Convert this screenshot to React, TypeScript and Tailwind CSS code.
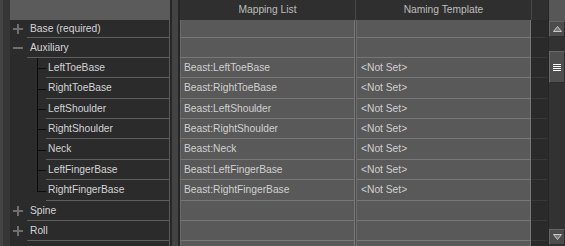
import React from "react";

const ROW_H = [18, 20, 20, 21, 20, 20, 21, 20, 21, 20, 20, 20];

type Item = { label: string; kind: "top" | "open" | "child" | "empty"; map?: string; last?: boolean };

const items: Item[] = [
  { label: "Base (required)", kind: "top" },
  { label: "Auxiliary", kind: "open" },
  { label: "LeftToeBase", kind: "child", map: "Beast:LeftToeBase" },
  { label: "RightToeBase", kind: "child", map: "Beast:RightToeBase" },
  { label: "LeftShoulder", kind: "child", map: "Beast:LeftShoulder" },
  { label: "RightShoulder", kind: "child", map: "Beast:RightShoulder" },
  { label: "Neck", kind: "child", map: "Beast:Neck" },
  { label: "LeftFingerBase", kind: "child", map: "Beast:LeftFingerBase" },
  { label: "RightFingerBase", kind: "child", map: "Beast:RightFingerBase", last: true },
  { label: "Spine", kind: "top" },
  { label: "Roll", kind: "top" },
  { label: "", kind: "empty" },
];

const font = { fontFamily: '"Liberation Sans", Arial, sans-serif' };

function Plus() {
  return (
    <svg width="10" height="10" viewBox="0 0 10 10">
      <rect x="0" y="4" width="10" height="2" fill="#6f6f6f" />
      <rect x="4" y="0" width="2" height="10" fill="#6f6f6f" />
    </svg>
  );
}
function Minus() {
  return (
    <svg width="10" height="10" viewBox="0 0 10 10">
      <rect x="0" y="4" width="10" height="2" fill="#6f6f6f" />
    </svg>
  );
}

function TreeRow({ it, h }: { it: Item; h: number }) {
  if (it.kind === "empty") {
    return <div className="flex shrink-0" style={{ height: h }} />;
  }
  if (it.kind === "child") {
    return (
      <div className="flex shrink-0" style={{ height: h }}>
        <div className="w-[27px] shrink-0" />
        <div className="relative w-[9px] shrink-0">
          <div
            className="absolute left-0 top-0 w-px bg-[#0c0c0c]"
            style={{ height: it.last ? "50%" : "100%" }}
          />
          <div className="absolute left-0 top-1/2 h-px w-[9px] bg-[#0c0c0c]" />
        </div>
        <div className="flex flex-1 items-center border-b border-[#5e5e5e] pl-[2px] text-[10.25px] text-[#d2d2d6]">
          {it.label}
        </div>
      </div>
    );
  }
  return (
    <div className="flex shrink-0" style={{ height: h }}>
      <div className="flex w-[17px] shrink-0 items-center justify-end">
        <div className="mr-[4px] flex">{it.kind === "open" ? <Minus /> : <Plus />}</div>
      </div>
      <div className="flex flex-1 items-center border-b border-[#5e5e5e] pl-[3px] text-[10.25px] text-[#d4d4da]">
        {it.label}
      </div>
    </div>
  );
}

function TableRow({ it, h }: { it: Item; h: number }) {
  return (
    <div className="flex shrink-0" style={{ height: h }}>
      <div className="flex w-[175px] shrink-0 items-center border-b border-r border-[#777] border-l border-l-[#6a6a6a] bg-[#595959] pl-[3px] text-[10.25px] text-[#d0d0d0]">
        {it.map ?? ""}
      </div>
      <div className="w-px shrink-0 bg-[#505050]" />
      <div className="flex w-[175px] shrink-0 items-center border-b border-r border-[#777] border-l border-l-[#6a6a6a] bg-[#595959] pl-[4px] text-[10.25px] text-[#d0d0d0]">
        {it.map ? "<Not Set>" : ""}
      </div>
      <div className="w-[16px] shrink-0 border-b border-[#383838] bg-[#2a2a2a]" />
    </div>
  );
}

function Tri({ down }: { down?: boolean }) {
  return (
    <svg width="9" height="6" viewBox="0 0 9 6">
      <polygon
        points={down ? "0.5,0.5 8.5,0.5 4.5,5.5" : "0.5,5.5 8.5,5.5 4.5,0.5"}
        fill="#7a7a7a"
        stroke="#c8c8c8"
        strokeWidth="1"
      />
    </svg>
  );
}

export default function App() {
  return (
    <div className="flex h-[246px] w-[565px] overflow-hidden bg-[#3b3b3b]" style={font}>
      {/* left strip */}
      <div className="w-[10px] shrink-0 border-l-[3px] border-[#444] bg-[#363636]" />
      {/* tree panel */}
      <div className="flex w-[160px] shrink-0 flex-col overflow-hidden border-r border-[#595959] bg-[#2b2b2b]">
        <div className="h-[20px] shrink-0 bg-[#5b5b5b]" />
        {items.map((it, i) => (
          <TreeRow key={i} it={it} h={ROW_H[i]} />
        ))}
      </div>
      {/* splitter */}
      <div className="w-[10px] shrink-0 border-x-2 border-[#272727] bg-[#434343]" />
      {/* table */}
      <div className="flex w-[368px] shrink-0 flex-col overflow-hidden bg-[#2b2b2b]">
        <div className="flex h-[20px] shrink-0 bg-[#2f2f2f] text-[10.25px] text-[#bdbdbd]">
          <div className="flex w-[176px] items-center justify-center border-r border-[#474747]">Mapping List</div>
          <div className="flex w-[176px] items-center justify-center border-r border-[#474747]">Naming Template</div>
          <div className="w-[16px]" />
        </div>
        {items.map((it, i) => (
          <TableRow key={i} it={it} h={ROW_H[i]} />
        ))}
      </div>
      {/* scrollbar */}
      <div className="flex w-[17px] shrink-0 flex-col border-l border-[#262626] bg-[#353535]">
        <div className="h-[21px] shrink-0 bg-[#575757]" />
        <div className="flex h-[16px] shrink-0 items-center justify-center border border-[#666] border-b-[#2e2e2e] border-r-[#2e2e2e] bg-[#4c4c4c]">
          <Tri />
        </div>
        <div className="h-[14px] shrink-0 bg-[#323232]" />
        <div className="flex h-[32px] shrink-0 flex-col items-center justify-center gap-[1px] border border-[#6a6a6a] border-b-[#2e2e2e] border-r-[#2e2e2e] bg-[#4f4f4f]">
          <div className="h-px w-[8px] bg-white" />
          <div className="h-px w-[8px] bg-white" />
          <div className="h-px w-[8px] bg-white" />
          <div className="h-px w-[8px] bg-white" />
        </div>
        <div className="flex-1 bg-[#323232]" />
        <div className="flex h-[16px] shrink-0 items-center justify-center border border-[#666] border-b-[#2e2e2e] border-r-[#2e2e2e] bg-[#4c4c4c]">
          <Tri down />
        </div>
        <div className="h-[1px] shrink-0 bg-[#323232]" />
      </div>
    </div>
  );
}
